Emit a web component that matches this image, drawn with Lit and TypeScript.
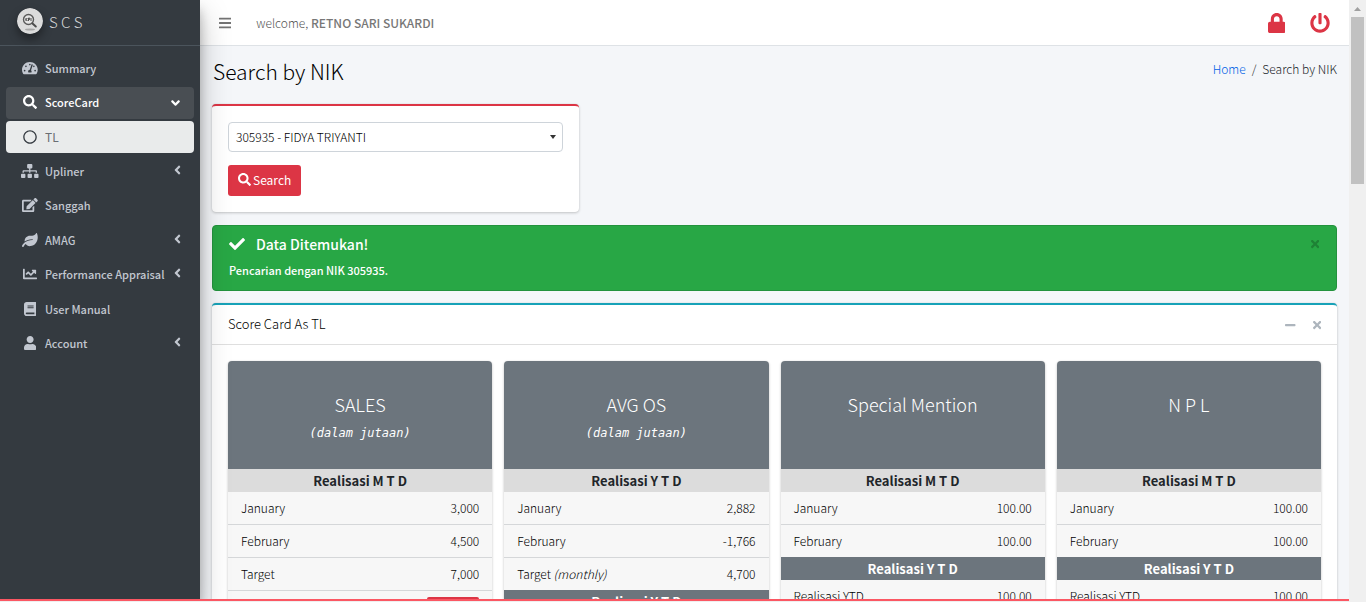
import { LitElement, html, svg, css, nothing } from "lit";
import { customElement, property } from "lit/decorators.js";
import { classMap } from "lit/directives/class-map.js";

type Glyph = { w: number; d: string };

const GLYPHS: Record<string, Glyph> = {
  gauge: { w: 576, d: "M288 32C128.94 32 0 160.94 0 320c0 52.8 14.25 102.26 39.06 144.8 5.61 9.62 16.3 15.2 27.44 15.2h443c11.14 0 21.83-5.58 27.44-15.2C561.75 422.26 576 372.8 576 320c0-159.06-128.94-288-288-288zm0 64c14.71 0 26.58 10.13 30.32 23.65-1.11 2.26-2.64 4.23-3.45 6.67l-9.22 27.67c-5.13 3.49-10.97 6.01-17.64 6.01-17.67 0-32-14.33-32-32S270.33 96 288 96zM96 384c-17.67 0-32-14.33-32-32s14.33-32 32-32 32 14.33 32 32-14.33 32-32 32zm48-160c-17.67 0-32-14.33-32-32s14.33-32 32-32 32 14.33 32 32-14.33 32-32 32zm246.77-72.41l-61.33 184C343.13 347.33 352 364.54 352 384c0 11.72-3.38 22.55-8.88 32H232.88c-5.5-9.45-8.88-20.28-8.88-32 0-33.94 26.5-61.43 59.9-63.59l61.34-184.01c4.17-12.56 17.73-19.45 30.36-15.17 12.57 4.19 19.35 17.79 15.17 30.36zm14.66 57.2l15.52-46.55c3.47-1.29 7.13-2.23 11.05-2.23 17.67 0 32 14.33 32 32s-14.33 32-32 32c-11.38-.01-20.89-6.28-26.57-15.22zM480 384c-17.67 0-32-14.33-32-32s14.33-32 32-32 32 14.33 32 32-14.33 32-32 32z" },
  search: { w: 512, d: "M505 442.7L405.3 343c-4.5-4.5-10.6-7-17-7H372c27.6-35.3 44-79.7 44-128C416 93.1 322.9 0 208 0S0 93.1 0 208s93.1 208 208 208c48.3 0 92.7-16.4 128-44v16.3c0 6.4 2.5 12.5 7 17l99.7 99.7c9.4 9.4 24.6 9.4 33.9 0l28.3-28.3c9.4-9.4 9.4-24.6.1-34zM208 336c-70.7 0-128-57.2-128-128 0-70.7 57.2-128 128-128 70.7 0 128 57.2 128 128 0 70.7-57.2 128-128 128z" },
  circle: { w: 512, d: "M256 8C119 8 8 119 8 256s111 248 248 248 248-111 248-248S393 8 256 8zm0 448c-110.5 0-200-89.5-200-200S145.500 56 256 56s200 89.500 200 200-89.500 200-200 200z" },
  sitemap: { w: 640, d: "M128 352H32c-17.67 0-32 14.33-32 32v96c0 17.67 14.33 32 32 32h96c17.67 0 32-14.33 32-32v-96c0-17.67-14.33-32-32-32zm-24-80h192v48h48v-48h192v48h48v-57.59c0-21.17-17.23-38.41-38.41-38.41H344v-64h40c17.67 0 32-14.33 32-32V32c0-17.67-14.33-32-32-32H256c-17.67 0-32 14.33-32 32v96c0 17.67 14.33 32 32 32h40v64H94.41C73.23 224 56 241.23 56 262.41V320h48v-48zm264 80h-96c-17.67 0-32 14.33-32 32v96c0 17.67 14.33 32 32 32h96c17.67 0 32-14.33 32-32v-96c0-17.67-14.33-32-32-32zm240 0h-96c-17.67 0-32 14.33-32 32v96c0 17.67 14.33 32 32 32h96c17.67 0 32-14.33 32-32v-96c0-17.67-14.33-32-32-32z" },
  edit: { w: 576, d: "M402.6 83.2l90.2 90.2c3.8 3.8 3.8 10 0 13.8L274.4 405.6l-92.8 10.3c-12.4 1.4-22.9-9.1-21.5-21.5l10.3-92.8L388.8 83.2c3.8-3.8 10-3.8 13.8 0zm162-22.9l-48.8-48.8c-15.2-15.2-39.9-15.2-55.2 0l-35.4 35.4c-3.8 3.8-3.8 10 0 13.8l90.2 90.2c3.8 3.8 10 3.8 13.8 0l35.4-35.4c15.2-15.3 15.2-40 0-55.2zM384 346.2V448H64V128h229.8c3.2 0 6.2-1.3 8.5-3.5l40-40c7.6-7.6 2.2-20.5-8.5-20.5H48C21.5 64 0 85.5 0 112v352c0 26.5 21.5 48 48 48h352c26.5 0 48-21.5 48-48V306.2c0-10.7-12.9-16-20.5-8.5l-40 40c-2.2 2.3-3.5 5.3-3.5 8.5z" },
  leaf: { w: 576, d: "M546.2 9.7c-5.6-12.5-21.6-13-28.3-1.2C486.9 62.4 431.4 96 368 96h-80C182 96 96 182 96 288c0 7 .8 13.7 1.5 20.5C161.3 262.8 253.4 224 384 224c8.8 0 16 7.2 16 16s-7.2 16-16 16C132.6 256 26 410.1 2.4 468c-6.600 16.300 1.200 34.900 17.500 41.600 16.400 6.800 35-1.100 41.800-17.300 1.500-3.600 20.900-47.900 71.900-90.600 32.400 43.900 94 85.800 174.900 77.200C465.500 467.500 576 326.700 576 154.300c0-50.200-10.800-102.200-29.800-144.600z" },
  chart: { w: 512, d: "M496 384H64V80c0-8.840-7.160-16-16-16H16C7.160 64 0 71.160 0 80v336c0 17.670 14.330 32 32 32h464c8.840 0 16-7.160 16-16v-32c0-8.840-7.160-16-16-16zM464 96H345.940c-21.380 0-32.090 25.850-16.970 40.970l32.400 32.400L288 242.750l-73.370-73.370c-12.500-12.500-32.760-12.500-45.250 0l-68.690 68.690c-6.250 6.250-6.250 16.380 0 22.630l22.620 22.620c6.250 6.250 16.380 6.250 22.630 0L192 237.250l73.370 73.370c12.500 12.500 32.760 12.500 45.250 0l96-96 32.400 32.400c15.120 15.120 40.970 4.410 40.970-16.970V112c.01-8.840-7.150-16-15.990-16z" },
  book: { w: 448, d: "M448 360V24c0-13.300-10.700-24-24-24H96C43 0 0 43 0 96v320c0 53 43 96 96 96h328c13.300 0 24-10.700 24-24v-16c0-7.500-3.500-14.300-8.900-18.700-4.200-15.400-4.200-59.300 0-74.700 5.400-4.300 8.900-11.100 8.900-18.600zM128 134c0-3.300 2.700-6 6-6h212c3.300 0 6 2.700 6 6v20c0 3.300-2.700 6-6 6H134c-3.300 0-6-2.700-6-6v-20zm0 64c0-3.300 2.700-6 6-6h212c3.300 0 6 2.700 6 6v20c0 3.300-2.700 6-6 6H134c-3.300 0-6-2.700-6-6v-20zm253.400 250H96c-17.700 0-32-14.300-32-32 0-17.600 14.400-32 32-32h285.400c-1.900 17.100-1.900 46.900 0 64z" },
  user: { w: 448, d: "M224 256c70.7 0 128-57.3 128-128S294.7 0 224 0 96 57.3 96 128s57.3 128 128 128zm89.6 32h-16.7c-22.2 10.2-46.9 16-72.9 16s-50.6-5.8-72.9-16h-16.7C60.2 288 0 348.2 0 422.4V464c0 26.5 21.5 48 48 48h352c26.5 0 48-21.5 48-48v-41.6c0-74.2-60.2-134.4-134.4-134.4z" },
  lock: { w: 448, d: "M400 224h-24v-72C376 68.2 307.8 0 224 0S72 68.2 72 152v72H48c-26.5 0-48 21.5-48 48v192c0 26.5 21.5 48 48 48h352c26.5 0 48-21.5 48-48V272c0-26.5-21.5-48-48-48zm-104 0H152v-72c0-39.7 32.3-72 72-72s72 32.3 72 72v72z" },
  power: { w: 512, d: "M400 54.1c63 45 104 118.6 104 201.9 0 136.8-110.8 247.7-247.5 248C120 504.3 8.2 393 8 256.4 7.9 173.1 48.9 99.3 111.8 54.2c11.7-8.3 28-4.8 35 7.7L162.6 90c5.9 10.5 3.1 23.8-6.6 31-41.5 30.8-68 79.6-68 134.9-.1 92.3 74.5 168.1 168 168.1 91.6 0 168.6-74.2 168-169.1-.3-51.8-24.7-101.8-68.1-134-9.7-7.2-12.4-20.5-6.5-30.9l15.8-28.1c7-12.4 23.2-16.1 34.8-7.8zM296 264V24c0-13.3-10.7-24-24-24h-32c-13.3 0-24 10.7-24 24v240c0 13.3 10.7 24 24 24h32c13.3 0 24-10.7 24-24z" },
  check: { w: 512, d: "M173.898 439.404l-166.4-166.4c-9.997-9.997-9.997-26.206 0-36.204l36.203-36.204c9.997-9.998 26.207-9.998 36.204 0L192 312.69 432.095 72.596c9.997-9.997 26.207-9.997 36.204 0l36.203 36.204c9.997 9.997 9.997 26.206 0 36.204l-294.4 294.401c-9.998 9.997-26.207 9.997-36.204-.001z" },
  times: { w: 352, d: "M242.72 256l100.07-100.07c12.28-12.28 12.28-32.19 0-44.48l-22.24-22.24c-12.28-12.28-32.19-12.28-44.48 0L176 189.28 75.93 89.21c-12.28-12.28-32.19-12.28-44.48 0L9.21 111.45c-12.28 12.28-12.28 32.19 0 44.48L109.28 256 9.21 356.07c-12.28 12.28-12.28 32.19 0 44.48l22.24 22.24c12.28 12.28 32.2 12.28 44.48 0L176 322.72l100.07 100.07c12.28 12.28 32.2 12.28 44.48 0l22.24-22.24c12.28-12.28 12.28-32.19 0-44.48L242.72 256z" },
  minus: { w: 448, d: "M416 208H32c-17.67 0-32 14.33-32 32v32c0 17.67 14.33 32 32 32h384c17.67 0 32-14.33 32-32v-32c0-17.67-14.33-32-32-32z" },
  bars: { w: 448, d: "M16 132h416c8.8 0 16-7.2 16-16V76c0-8.800-7.200-16-16-16H16C7.200 60 0 67.200 0 76v40c0 8.800 7.200 16 16 16zm0 160h416c8.800 0 16-7.200 16-16v-40c0-8.800-7.200-16-16-16H16c-8.800 0-16 7.200-16 16v40c0 8.800 7.200 16 16 16zm0 160h416c8.800 0 16-7.200 16-16v-40c0-8.800-7.200-16-16-16H16c-8.800 0-16 7.200-16 16v40c0 8.800 7.200 16 16 16z" },
  left: { w: 256, d: "M31.7 239l136-136c9.4-9.4 24.6-9.4 33.9 0l22.6 22.6c9.4 9.4 9.4 24.6 0 33.9L127.900 256l96.400 96.400c9.400 9.400 9.400 24.600 0 33.900L201.700 409c-9.400 9.400-24.600 9.400-33.900 0l-136-136c-9.500-9.400-9.500-24.600-.1-34z" },
};

const icon = (name: string, size: number) => {
  const g = GLYPHS[name];
  return html`<svg viewBox="0 0 ${g.w} 512" width=${(g.w / 512) * size} height=${size} fill="currentColor" aria-hidden="true">${svg`<path d=${g.d}></path>`}</svg>`;
};

const FONT = css`"Noto Sans CJK SC", "Open Sans", sans-serif`;

interface NavItem { label: string; icon: string; open?: boolean; menu?: boolean; children?: NavItem[] }

const NAV: NavItem[] = [
  { label: "Summary", icon: "gauge" },
  { label: "ScoreCard", icon: "search", open: true, menu: true, children: [{ label: "TL", icon: "circle" }] },
  { label: "Upliner", icon: "sitemap", menu: true },
  { label: "Sanggah", icon: "edit" },
  { label: "AMAG", icon: "leaf", menu: true },
  { label: "Performance Appraisal", icon: "chart", menu: true },
  { label: "User Manual", icon: "book" },
  { label: "Account", icon: "user", menu: true },
];

interface Row { label: string; note?: string; value: string; badge?: boolean }
interface Section { title: string; rows: Row[] }
interface Metric { title: string; sub?: string; sections: Section[] }

const METRICS: Metric[] = [
  { title: "SALES", sub: "(dalam jutaan)", sections: [
    { title: "Realisasi M T D", rows: [
      { label: "January", value: "3,000" },
      { label: "February", value: "4,500" },
      { label: "Target", value: "7,000" },
      { label: "", value: "", badge: true },
    ] },
  ] },
  { title: "AVG OS", sub: "(dalam jutaan)", sections: [
    { title: "Realisasi Y T D", rows: [
      { label: "January", value: "2,882" },
      { label: "February", value: "-1,766" },
      { label: "Target", note: "(monthly)", value: "4,700" },
    ] },
    { title: "Realisasi Y T D", rows: [] },
  ] },
  { title: "Special Mention", sections: [
    { title: "Realisasi M T D", rows: [
      { label: "January", value: "100.00" },
      { label: "February", value: "100.00" },
    ] },
    { title: "Realisasi Y T D", rows: [{ label: "Realisasi YTD", value: "100.00" }] },
  ] },
  { title: "N P L", sections: [
    { title: "Realisasi M T D", rows: [
      { label: "January", value: "100.00" },
      { label: "February", value: "100.00" },
    ] },
    { title: "Realisasi Y T D", rows: [{ label: "Realisasi YTD", value: "100.00" }] },
  ] },
];

@customElement("side-nav")
class SideNav extends LitElement {
  static styles = css`
    :host { display: block; background: #343a40; color: #c2c7d0; font: 500 11px/20px ${FONT};
      box-shadow: 0 14px 28px rgba(0, 0, 0, .25), 0 10px 10px rgba(0, 0, 0, .22); }
    svg { display: block; flex: none; }
    a { color: inherit; text-decoration: none; }
    .brand { display: flex; align-items: center; gap: 6px; height: 45px; padding: 0 17px 3px; box-sizing: border-box;
      font-size: 15px; font-weight: 300; color: rgba(255, 255, 255, .8); }
    .logo { border-radius: 50%; box-shadow: 0 5px 10px rgba(0, 0, 0, .4); }
    .brand-name { padding-top: 2px; }
    .brand-wrap { border-bottom: 1px solid #4b545c; }
    ul { list-style: none; margin: 0; padding: 0; }
    .menu { padding: 7px 6px; }
    .item { margin-bottom: 2px; }
    .item:nth-child(even) { margin-bottom: 3px; }
    .sub { padding-top: 2px; }
    .link { display: flex; align-items: center; height: 32px; padding: 0 13px 0 12px; border-radius: 4px; }
    .ico { display: flex; justify-content: center; flex: none; width: 24px; margin-right: 3px; padding-bottom: 2px; }
    .label { flex: 1; white-space: nowrap; padding-bottom: 2px; }
    .arrow { padding-bottom: 4px; }
    .open { background: #494e53; color: #fff; padding-right: 15px; }
    .open .arrow { transform: rotate(-90deg); padding: 0; }
    .current { background: #e9ebeb; color: #6a6e73; font-weight: 400; font-size: 12px; }
    .current .ico { color: #343a40; padding: 0; }
    .current .label { padding: 0; }
  `;
  link(item: NavItem, current = false) {
    return html`<a href="#" class=${classMap({ link: true, open: !!item.open, current })}>
      <span class="ico">${icon(item.icon, 14)}</span><span class="label">${item.label}</span>
      ${item.menu ? html`<span class="arrow">${icon("left", 14)}</span>` : nothing}</a>`;
  }
  render() {
    return html`
      <div class="brand-wrap"><a href="#" class="brand">
        <svg class="logo" width="26" height="26" viewBox="0 0 26 26" aria-hidden="true">
          <circle cx="13" cy="13" r="13" fill="#dcdcdc"></circle>
          <ellipse cx="13" cy="21.500" rx="5" ry="1" fill="#a8a8a8"></ellipse>
          <circle cx="11.500" cy="11.500" r="5" fill="#e4e4e4" stroke="#5a5a5a" stroke-width="1.400"></circle>
          <path d="M15.500 15.500l3.300 3" stroke="#4d4d4d" stroke-width="2" stroke-linecap="round"></path>
          <path d="M9 10v3M9 11.500l1.500-1.500M9 11.500l1.500 1.500M11.500 13v-3h1.200v1.500h-1.200M14 10v3" stroke="#444" stroke-width=".9" fill="none"></path>
        </svg>
        <span class="brand-name">S C S</span></a></div>
      <nav><ul class="menu">${NAV.map((n) => html`<li class="item">${this.link(n)}
        ${n.children ? html`<ul class="sub">${n.children.map((c) => html`<li>${this.link(c, true)}</li>`)}</ul>` : nothing}
      </li>`)}</ul></nav>`;
  }
}

@customElement("metric-card")
class MetricCard extends LitElement {
  @property({ attribute: false }) metric!: Metric;
  static styles = css`
    :host { display: block; min-width: 0; background: #f7f7f7; border-radius: 4px; overflow: hidden; color: #000;
      box-shadow: 0 0 1px rgba(0, 0, 0, .13), 0 1px 3px rgba(0, 0, 0, .2); }
    .head { min-height: 108px; box-sizing: border-box; padding-top: 30px; background: #6c757d; color: #fff; text-align: center; }
    h3 { margin: 0; font-size: 18px; line-height: 26px; font-weight: 300; }
    .sub { display: block; font: italic 400 12px/20px "DejaVu Sans Mono", monospace; padding-top: 6px; }
    table { width: 100%; border-collapse: separate; border-spacing: 0; }
    th, td { padding: 0; text-align: left; font-weight: 300; }
    .band { height: 23px; line-height: 22px; text-align: center; font-size: 13px; font-weight: 700; background: #dcdcdc; color: #212529; }
    .dark { background: #6c757d; color: #fff; }
    .row > * { height: 32px; border-bottom: 1px solid #d5d7d9; line-height: 32px; }
    .row:last-child > * { border-bottom: 0; }
    .name { padding-left: 13px; }
    .value { padding-right: 13px; text-align: right; }
    .badge { display: inline-block; vertical-align: top; width: 52px; height: 20px; margin-top: 6px; border-radius: 2px; background: #dc3545; }
  `;
  render() {
    const m = this.metric;
    return html`<div class="head"><h3>${m.title}</h3>${m.sub ? html`<i class="sub">${m.sub}</i>` : nothing}</div>
      <table>${m.sections.map((s, i) => html`<tbody>
        <tr><th colspan="2" scope="colgroup" class=${classMap({ band: true, dark: i > 0 })}>${s.title}</th></tr>
        ${s.rows.map((r) => html`<tr class="row"><th scope="row" class="name">${r.label} ${r.note ? html`<i>${r.note}</i>` : nothing}</th>
          <td class="value">${r.badge ? html`<span class="badge"></span>` : r.value}</td></tr>`)}
      </tbody>`)}</table>`;
  }
}

@customElement("app-root")
class AppRoot extends LitElement {
  static styles = css`
    :host { display: grid; grid-template-columns: 200px minmax(0, 1fr) 17px; grid-template-rows: minmax(0, 1fr) auto; height: 100vh;
      overflow: hidden; background: #f4f6f9; color: #212529; font: 400 12px/18px ${FONT}; }
    svg { display: block; flex: none; }
    side-nav { z-index: 1; }
    a { color: #007bff; text-decoration: none; }
    button { border: 0; padding: 0; background: none; font: inherit; color: inherit; cursor: pointer; }
    .main { overflow: hidden; }
    .topbar { display: flex; align-items: center; height: 45px; padding: 0 19px; background: #fff; border-bottom: 1px solid #dee2e6; color: #737373; }
    .welcome { flex: 1; padding-left: 25px; font-weight: 300; color: #555; }
    .welcome b { font-weight: 500; color: #777; }
    .tools { display: flex; align-items: center; gap: 25px; color: #dc3545; }
    .content { padding: 0 12px; }
    .heading { display: flex; justify-content: space-between; align-items: flex-start; padding: 10px 0 17px; }
    h1 { margin: 0; padding-left: 1px; font-size: 21px; line-height: 31px; font-weight: 300; color: #000; }
    .crumbs { display: flex; gap: 6px; list-style: none; margin: 0; padding: 4px 0 0; font-weight: 300; color: #212529; }
    .crumbs a { color: #0062e6; }
    .cols { display: grid; grid-template-columns: repeat(3, minmax(0, 1fr)); gap: 12px; margin-bottom: 13px; }
    .card { background: #fff; border-top: 2px solid #dc3545; border-radius: 4px;
      box-shadow: 0 0 1px rgba(0, 0, 0, .13), 0 1px 3px rgba(0, 0, 0, .2); }
    .info { border-top-color: #17a2b8; }
    .form { display: block; padding: 16px; }
    .pick { display: grid; align-items: center; margin-bottom: 13px; }
    .pick > * { grid-area: 1 / 1; }
    select { appearance: none; width: 100%; height: 30px; padding: 0 7px; border: 1px solid #ced4da; border-radius: 4px; background: #fff;
      font: inherit; font-weight: 300; color: #000; }
    .caret { justify-self: end; margin-right: 7px; pointer-events: none; }
    .search { display: flex; align-items: center; gap: 2px; height: 31px; padding: 0 10px 2px; border-radius: 3px; background: #dc3545; color: #fff; }
    .alert { display: grid; grid-template-columns: 1fr auto; margin-bottom: 12px; padding: 8px 17px 11px 16px; border: 1px solid #23923d; border-radius: 4px;
      background: #28a745; color: #fff; }
    h5 { display: flex; align-items: center; gap: 11px; margin: 0; font-size: 14px; line-height: 20px; font-weight: 500; }
    .alert p { margin: 7px 0 0; font-size: 11px; font-weight: 500; }
    .dismiss { color: #1e7e34; opacity: .9; align-self: start; height: 20px; }
    .card-head { display: flex; align-items: center; justify-content: space-between; height: 39px; padding: 0 16px; border-bottom: 1px solid #dfdfdf; }
    h2 { margin: 0; padding-bottom: 2px; font-size: 13px; line-height: 20px; font-weight: 300; color: #000; }
    .card-tools { display: flex; align-items: center; gap: 17px; color: #adb5bd; }
    .metrics { display: grid; grid-template-columns: repeat(4, minmax(0, 1fr)); gap: 12px; align-items: start; padding: 16px; }
    .rail { grid-row: 1 / 3; grid-column: 3; background: #f0f0f0; display: grid; grid-template-rows: 17px 167px; justify-items: center; align-items: center; }
    .thumb { width: 13px; height: 100%; background: #c1c1c1; }
    .foot { grid-column: 1 / 3; z-index: 2; height: 1px; border-top: 2px solid #fb5763; background: #efefef; }
  `;
  render() {
    return html`
      <side-nav></side-nav>
      <div class="main">
        <header class="topbar">
          <button aria-label="Menu">${icon("bars", 14)}</button>
          <span class="welcome">welcome, <b>RETNO SARI SUKARDI</b></span>
          <div class="tools">
            <button aria-label="Lock">${icon("lock", 20)}</button>
            <button aria-label="Log out">${icon("power", 20)}</button>
          </div>
        </header>
        <main class="content">
          <div class="heading">
            <h1>Search by NIK</h1>
            <ol class="crumbs"><li><a href="#">Home</a></li><li aria-hidden="true">/</li><li>Search by NIK</li></ol>
          </div>
          <div class="cols">
            <section class="card"><form class="form" @submit=${(e: Event) => e.preventDefault()}>
              <div class="pick">
                <select aria-label="NIK"><option>305935 - FIDYA TRIYANTI</option></select>
                <svg class="caret" width="6" height="4" viewBox="0 0 6 4"><path d="M0 0h6L3 4z" fill="#333"></path></svg>
              </div>
              <button class="search" type="submit">${icon("search", 13)} Search</button>
            </form></section>
          </div>
          <section class="alert" role="alert">
            <div><h5>${icon("check", 16)} Data Ditemukan!</h5><p>Pencarian dengan NIK 305935.</p></div>
            <button class="dismiss" aria-label="Close">${icon("times", 12)}</button>
          </section>
          <section class="card info">
            <div class="card-head"><h2>Score Card As TL</h2>
              <div class="card-tools">
                <button aria-label="Collapse">${icon("minus", 12)}</button>
                <button aria-label="Remove">${icon("times", 12)}</button>
              </div></div>
            <div class="metrics">${METRICS.map((m) => html`<metric-card .metric=${m}></metric-card>`)}</div>
          </section>
        </main>
      </div>
      <div class="rail" aria-hidden="true">
        <svg width="7" height="4" viewBox="0 0 7 4"><path d="M3.500 0L7 4H0z" fill="#a0a0a0"></path></svg>
        <span class="thumb"></span>
      </div>
      <footer class="foot"></footer>`;
  }
}
